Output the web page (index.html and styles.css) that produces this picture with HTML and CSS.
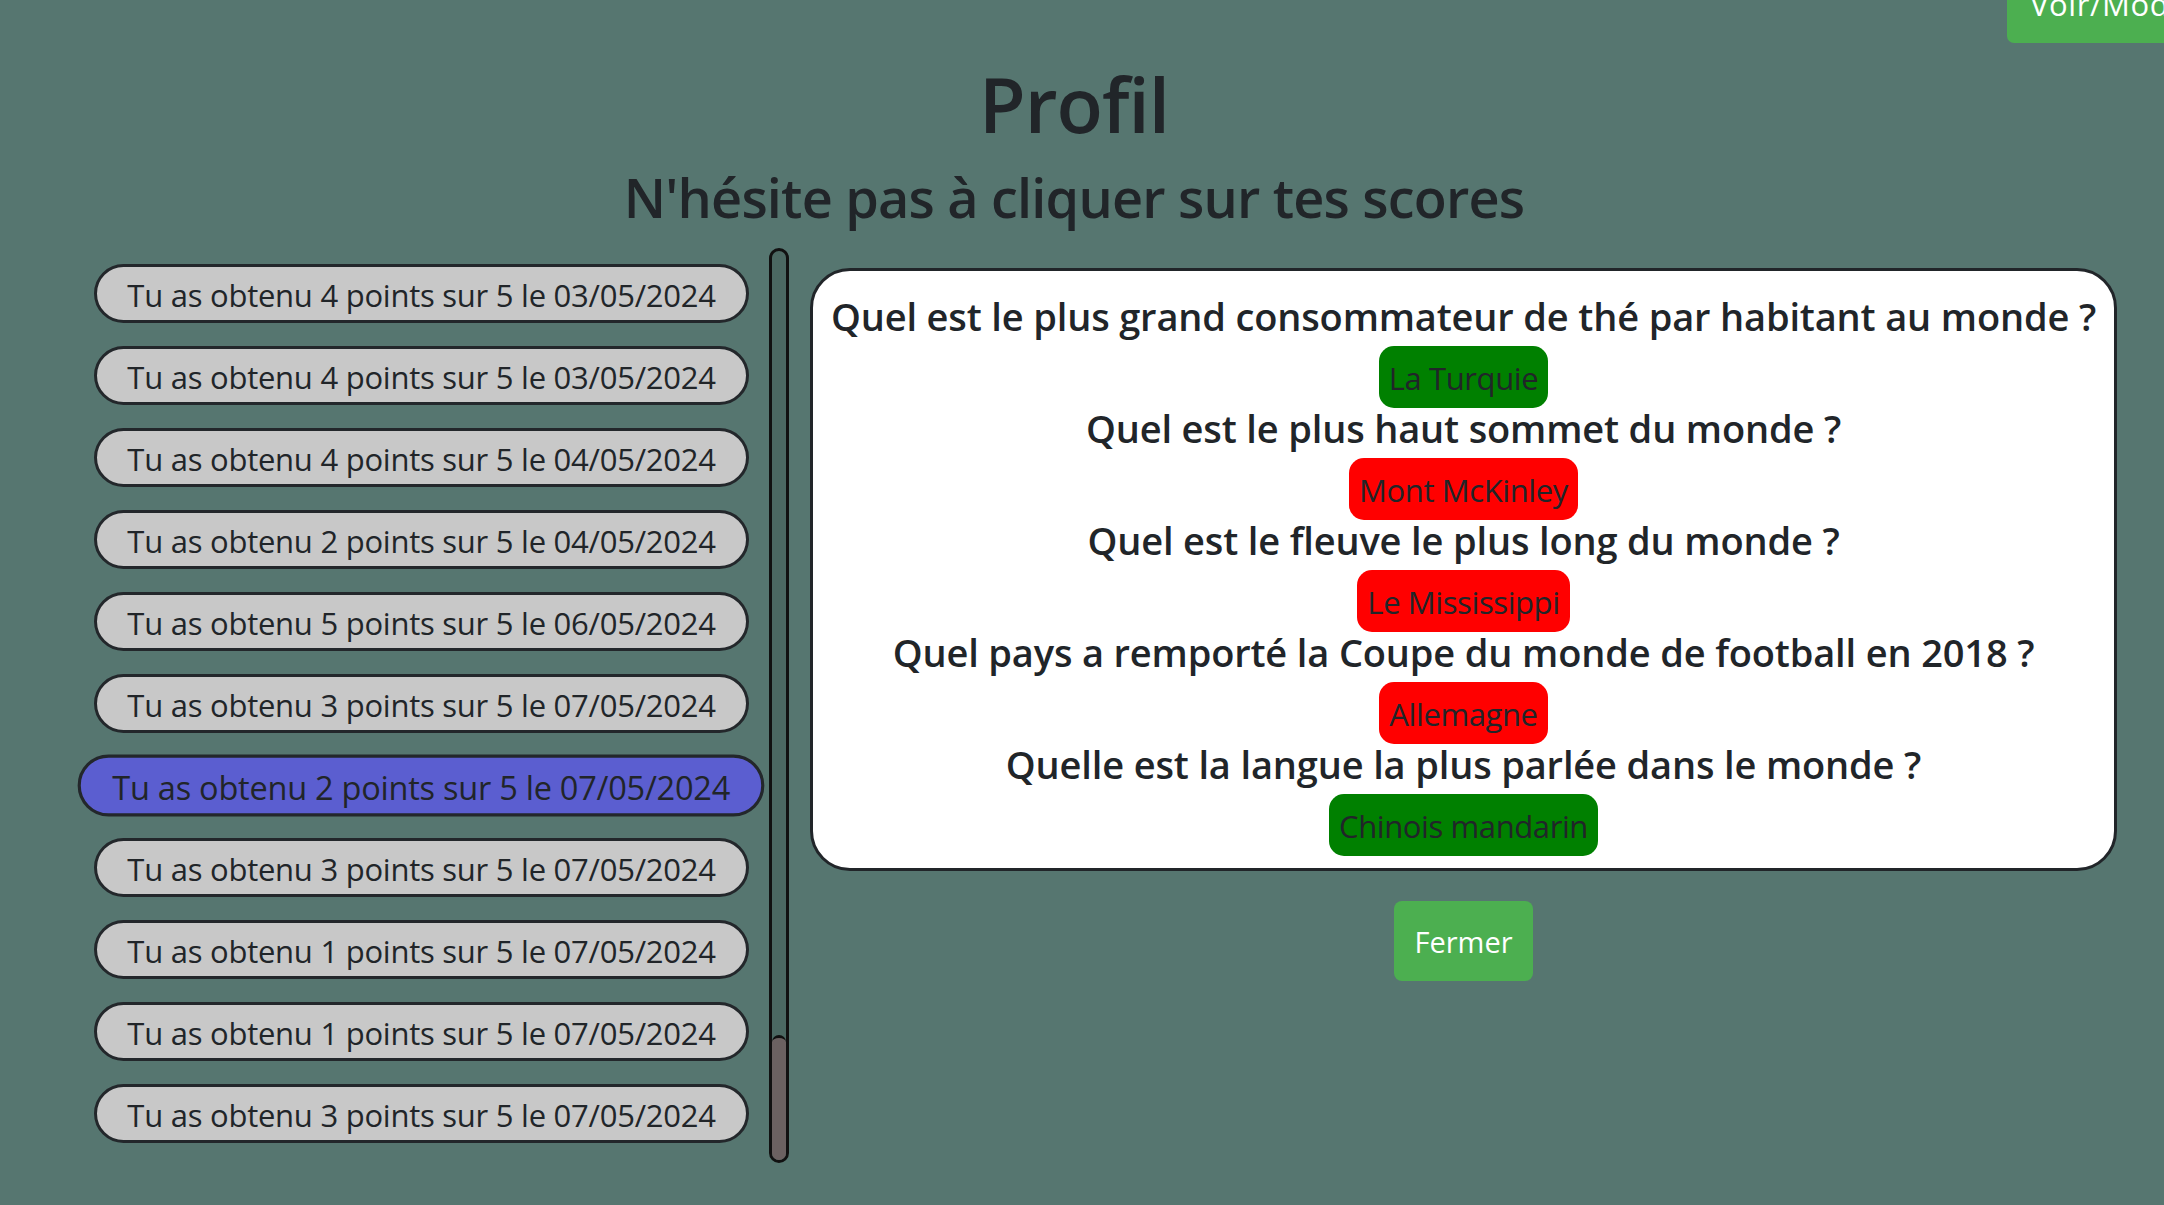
FILE: index.html
```html
<!DOCTYPE html>
<html lang="fr">
<head>
<meta charset="utf-8">
<title>Profil</title>
<link rel="stylesheet" href="styles.css">
</head>
<body>
<a class="btn-green btn-top" href="#">Voir/Modifier mon profil</a>
<header class="page-head">
  <h1 class="title">Profil</h1>
  <h3 class="subtitle">N'hésite pas à cliquer sur tes scores</h3>
</header>
<main class="main">
  <div class="scores">
    <div class="score-list">
      <button class="score">Tu as obtenu 4 points sur 5 le 03/05/2024</button>
      <button class="score">Tu as obtenu 4 points sur 5 le 03/05/2024</button>
      <button class="score">Tu as obtenu 4 points sur 5 le 04/05/2024</button>
      <button class="score">Tu as obtenu 2 points sur 5 le 04/05/2024</button>
      <button class="score">Tu as obtenu 5 points sur 5 le 06/05/2024</button>
      <button class="score">Tu as obtenu 3 points sur 5 le 07/05/2024</button>
      <button class="score active">Tu as obtenu 2 points sur 5 le 07/05/2024</button>
      <button class="score">Tu as obtenu 3 points sur 5 le 07/05/2024</button>
      <button class="score">Tu as obtenu 1 points sur 5 le 07/05/2024</button>
      <button class="score">Tu as obtenu 1 points sur 5 le 07/05/2024</button>
      <button class="score">Tu as obtenu 3 points sur 5 le 07/05/2024</button>
    </div>
    <div class="scrollbar"><div class="thumb"></div></div>
  </div>
  <section class="detail">
    <div class="card">
      <div class="q">
        <h5 class="q-text">Quel est le plus grand consommateur de thé par habitant au monde ?</h5>
        <span class="ans ok">La Turquie</span>
      </div>
      <div class="q">
        <h5 class="q-text">Quel est le plus haut sommet du monde ?</h5>
        <span class="ans ko">Mont McKinley</span>
      </div>
      <div class="q">
        <h5 class="q-text">Quel est le fleuve le plus long du monde ?</h5>
        <span class="ans ko">Le Mississippi</span>
      </div>
      <div class="q">
        <h5 class="q-text">Quel pays a remporté la Coupe du monde de football en 2018 ?</h5>
        <span class="ans ko">Allemagne</span>
      </div>
      <div class="q">
        <h5 class="q-text">Quelle est la langue la plus parlée dans le monde ?</h5>
        <span class="ans ok">Chinois mandarin</span>
      </div>
    </div>
    <button class="btn-green close">Fermer</button>
  </section>
</main>
</body>
</html>
```

FILE: styles.css
```css
* {
  box-sizing: border-box;
}

html,
body {
  margin: 0;
}

body {
  position: relative;
  height: 1205px;
  overflow: hidden;
  background: #567670;
  color: #212529;
  font-family: "Open Sans", "Noto Sans", sans-serif;
}

.btn-green {
  display: inline-block;
  padding: 19px 20px 17px;
  border: 0;
  border-radius: 8px;
  background: #4caf50;
  color: #fff;
  font-family: inherit;
  font-size: 29px;
  line-height: 44px;
  text-decoration: none;
  white-space: nowrap;
  cursor: pointer;
}

.btn-top {
  position: absolute;
  top: -37px;
  left: 2007px;
  padding-left: 23px;
  border-radius: 7px;
  font-size: 31px;
  letter-spacing: 0.6px;
}

.page-head {
  padding: 56px 16px 0 0;
  text-align: center;
}

.title {
  margin: 0;
  font-size: 76px;
  font-weight: 600;
  line-height: 96px;
  letter-spacing: -1px;
}

.subtitle {
  margin: 13px 0 0;
  font-size: 54px;
  font-weight: 600;
  line-height: 64px;
  letter-spacing: -0.8px;
}

.main {
  display: flex;
  align-items: flex-start;
  margin-top: 19px;
  padding-left: 74px;
}

.scores {
  display: flex;
  height: 915px;
}

.score-list {
  display: flex;
  flex-direction: column;
  justify-content: flex-end;
  align-items: center;
  gap: 23px;
  width: 695px;
  height: 100%;
  padding-bottom: 20px;
  overflow: hidden;
}

.score {
  flex: none;
  padding: 4px 30px 1px;
  border: 3px solid #23272b;
  border-radius: 30px;
  background: #c8c8c8;
  color: #212529;
  font-family: inherit;
  font-size: 31px;
  line-height: 48px;
  letter-spacing: -0.25px;
  white-space: nowrap;
  cursor: pointer;
}

.score.active {
  background: #5b5ed0;
  transform: scale(1.05);
}

.scrollbar {
  display: flex;
  flex-direction: column;
  justify-content: flex-end;
  width: 20px;
  height: 100%;
  border: 3px solid #111;
  border-radius: 10px;
  background: #4b6862;
  overflow: hidden;
}

.thumb {
  height: 125px;
  border-top: 3px solid #111;
  border-radius: 8px 8px 0 0;
  background: #6b6161;
}

.detail {
  display: flex;
  flex-direction: column;
  align-items: center;
  width: 1307px;
  margin: 20px 0 0 21px;
}

.card {
  display: flex;
  flex-direction: column;
  align-items: center;
  width: 100%;
  padding: 25px 16px 12px;
  border: 3px solid #212529;
  border-radius: 40px;
  background: #fff;
}

.q {
  display: flex;
  flex-direction: column;
  align-items: center;
}

.q-text {
  margin: 0 0 10px;
  font-size: 38px;
  font-weight: 600;
  line-height: 40px;
  letter-spacing: -0.15px;
  text-align: center;
  white-space: nowrap;
}

.ans {
  padding: 8px 10px 6px;
  border-radius: 15px;
  color: #212529;
  font-size: 31px;
  line-height: 48px;
  letter-spacing: -0.4px;
}

.ans.ok {
  background: #008000;
}

.ans.ko {
  background: #ff0000;
}

.close {
  margin-top: 30px;
}
```
